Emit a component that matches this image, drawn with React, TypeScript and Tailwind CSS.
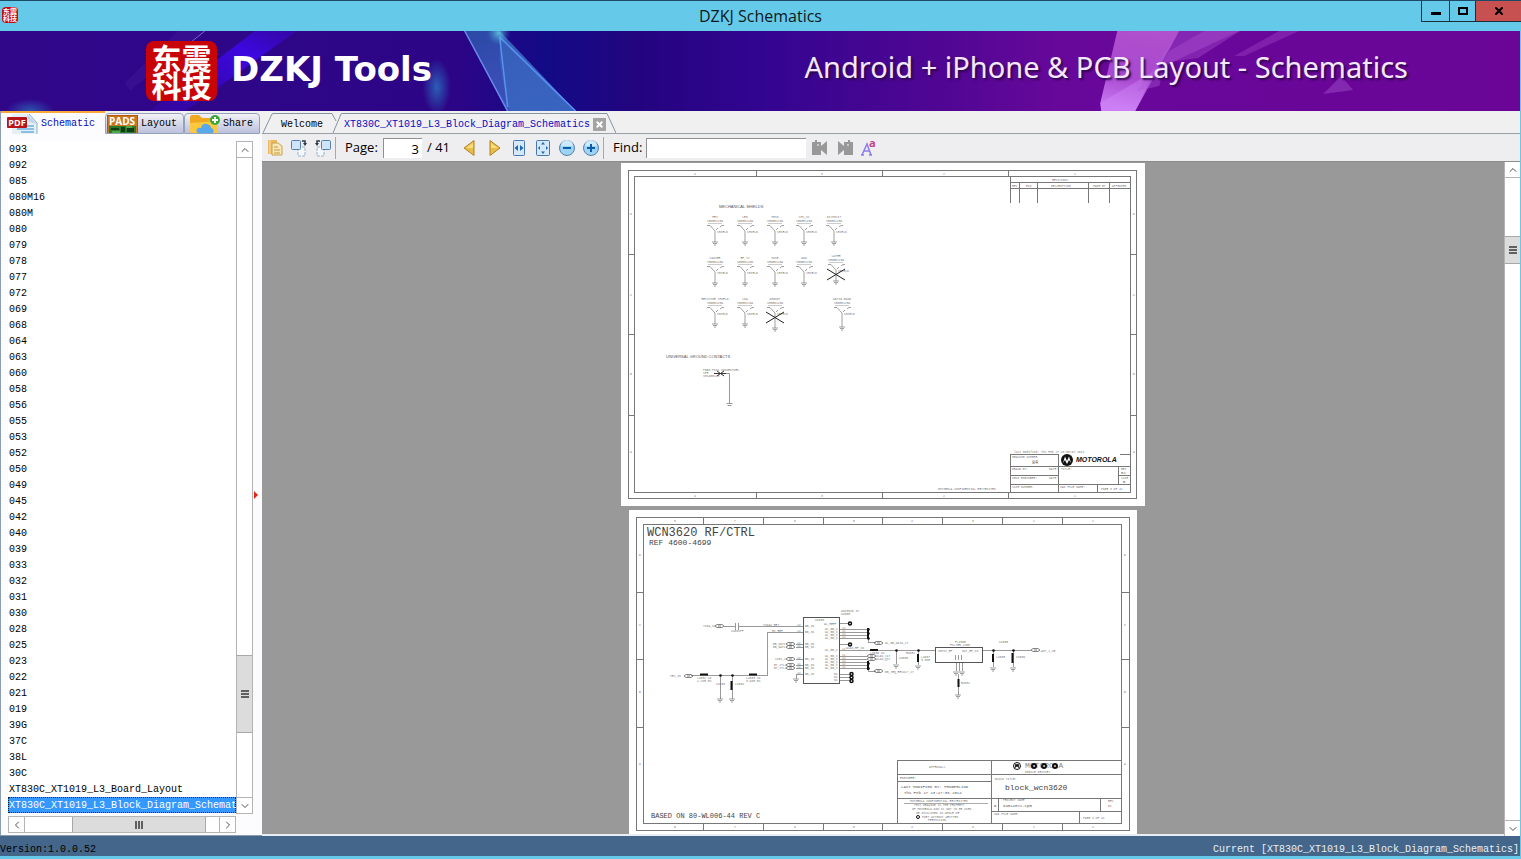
import { ChevronDown, ChevronLeft, ChevronRight, ChevronUp, X } from "lucide-react";
import { type ReactNode, useState } from "react";

const MODELS = [
  "093", "092", "085", "080M16", "080M", "080", "079", "078", "077", "072", "069",
  "068", "064", "063", "060", "058", "056", "055", "053", "052", "050", "049", "045",
  "042", "040", "039", "033", "032", "031", "030", "028", "025", "023", "022", "021",
  "019", "39G", "37C", "38L", "30C",
  "XT830C_XT1019_L3_Board_Layout",
  "XT830C_XT1019_L3_Block_Diagram_Schematics",
];

const CURRENT = "XT830C_XT1019_L3_Block_Diagram_Schematics";

function TitleBar() {
  return (
    <header className="relative flex h-[31px] shrink-0 items-center justify-center border-t border-[#1c4a66] bg-[#65cae9]">
      <p className="absolute left-0.5 top-1.5 size-4 rounded-sm bg-[#c8080c] py-px text-center font-['Noto_Sans_CJK_SC',sans-serif] text-[7px] font-bold leading-[7px] text-white">
        东震
        <br />
        科技
      </p>
      <h1 className="text-base leading-7 text-[#101820]">DZKJ Schematics</h1>
      <div className="absolute right-0 top-0 flex h-[21px] border-b border-l border-[#1d2c38] text-black">
        <button type="button" aria-label="Minimize" className="flex w-7 items-center justify-center border-r border-[#1d2c38]">
          <span className="mt-1 h-[3px] w-2.5 bg-black" />
        </button>
        <button type="button" aria-label="Maximize" className="flex w-[26px] items-center justify-center border-r border-[#1d2c38]">
          <span className="h-2 w-2.5 border-2 border-black" />
        </button>
        <button type="button" aria-label="Close" className="flex w-[45px] items-center justify-center bg-[#c75050]">
          <X size={12} strokeWidth={4} />
        </button>
      </div>
    </header>
  );
}

function BannerArt() {
  return (
    <svg className="absolute inset-0 size-full" viewBox="0 0 1521 80" preserveAspectRatio="none" aria-hidden="true">
      <defs>
        <linearGradient id="base">
          <stop offset="0" stopColor="#31078a" />
          <stop offset="0.3" stopColor="#2c0586" />
          <stop offset="0.36" stopColor="#130a86" />
          <stop offset="0.42" stopColor="#23047f" />
          <stop offset="0.5" stopColor="#320590" />
          <stop offset="0.62" stopColor="#500693" />
          <stop offset="0.7" stopColor="#68089b" />
          <stop offset="1" stopColor="#6a0597" />
        </linearGradient>
        <linearGradient id="beam" x1="0" y1="1" x2="1" y2="0">
          <stop offset="0" stopColor="#3a05c8" stopOpacity="0.3" />
          <stop offset="0.7" stopColor="#3c08e0" />
          <stop offset="1" stopColor="#3a06c0" stopOpacity="0.5" />
        </linearGradient>
        <linearGradient id="shard" x1="0" y1="0" x2="0.6" y2="1">
          <stop offset="0" stopColor="#2a50a8" />
          <stop offset="0.5" stopColor="#3a55b8" />
          <stop offset="1" stopColor="#3c5cc0" />
        </linearGradient>
        <linearGradient id="pink" x1="0.6" y1="0" x2="0.4" y2="1">
          <stop offset="0" stopColor="#b050cc" />
          <stop offset="0.6" stopColor="#a848d0" />
          <stop offset="1" stopColor="#c878f0" />
        </linearGradient>
        <radialGradient id="glow">
          <stop offset="0" stopColor="#2a80c8" stopOpacity="0.9" />
          <stop offset="1" stopColor="#2a80c8" stopOpacity="0" />
        </radialGradient>
        <radialGradient id="spark">
          <stop offset="0" stopColor="#70e8f0" />
          <stop offset="1" stopColor="#40a0d0" stopOpacity="0" />
        </radialGradient>
      </defs>
      <rect width="1521" height="80" fill="url(#base)" />
      <path d="M150 80 255 0h42L185 80z" fill="url(#beam)" />
      <path d="M125 52 178 0h26L130 60z" fill="#4a20a0" opacity="0.3" />
      <path d="M190 12 205 0" stroke="#7a6ad0" strokeWidth="1" />
      <ellipse cx="30" cy="80" rx="24" ry="12" fill="url(#glow)" opacity="0.7" />
      <ellipse cx="437" cy="56" rx="14" ry="28" fill="url(#glow)" opacity="0.8" />
      <path d="M465 0h35l76 80h-69z" fill="url(#shard)" opacity="0.9" />
      <path d="M465 0 508 80" stroke="#6a8ae8" strokeWidth="1.5" />
      <path d="M500 0v30l8 46 3 4h65z" fill="#3a78c8" opacity="0.45" />
      <path d="M500 6 576 80M500 6l8 70" stroke="#5a90f0" strokeWidth="1.5" fill="none" />
      <ellipse cx="499" cy="2" rx="12" ry="12" fill="url(#spark)" opacity="0.7" />
      <path d="M1118 0h62l-44 80h-34l-1-8z" fill="url(#pink)" />
      <path d="M1101 72 1155 40l-19 40h-34z" fill="#d890ff" opacity="0.35" />
      <path d="M1180 0h60l-75 35-5 20-22 5z" fill="#b058d8" opacity="0.4" />
      <path d="M1170 20 1205 0h36l-42 27-36 5z" fill="#b458d8" opacity="0.35" />
      <path d="M1280 0h20l-55 25h-10z" fill="#a850d0" opacity="0.35" />
      <path d="M1324 63 1342 45l12 14z" fill="#9440c0" opacity="0.6" />
    </svg>
  );
}

function Banner() {
  return (
    <div className="relative flex h-20 shrink-0 items-center overflow-hidden bg-[#31078a]">
      <BannerArt />
      <p className="relative ml-[146px] flex h-[60px] w-[71px] items-center justify-center rounded-lg bg-[#c90408] font-['Noto_Sans_CJK_SC',sans-serif] text-[30px] font-bold leading-[27px] text-white">
        东震
        <br />
        科技
      </p>
      <span className="relative ml-3.5 pb-1 font-['DejaVu_Sans',sans-serif] text-[34px] font-bold leading-none text-white">
        DZKJ Tools
      </span>
      <span className="relative ml-auto mr-28 pb-2 font-['Noto_Sans',sans-serif] text-[29px] leading-9 text-[#f4e8ff] [text-shadow:2px_2px_2px_#30064c]">
        Android + iPhone &amp; PCB Layout - Schematics
      </span>
    </div>
  );
}

function PdfIcon() {
  return (
    <svg width="31" height="20" viewBox="0 0 31 20" className="font-['Open_Sans',sans-serif]" aria-hidden="true">
      <path d="M5 0h17l8 9v11H5z" fill="#e6eef6" />
      <path d="M22 0l8 9v11" fill="none" stroke="#8ab0c8" />
      <path d="M20 0l2 8 8 2z" fill="#c0d8ea" />
      <path d="M14 12h13M10 15h17M14 18h13" stroke="#88c0e4" strokeWidth="2" />
      <rect x="0" y="3" width="20" height="11" rx="1" fill="#b81418" />
      <text x="10" y="12" fontSize="9" fontWeight="bold" fill="#fff" textAnchor="middle">PDF</text>
    </svg>
  );
}

function PadsIcon() {
  return (
    <svg width="31" height="18" viewBox="0 0 31 18" className="overflow-visible font-['Open_Sans',sans-serif]" aria-hidden="true">
      <rect width="31" height="18" fill="#b4580c" />
      <rect x="1" y="1" width="29" height="17" fill="#c87820" />
      <rect x="2" y="11" width="27" height="7" fill="#2a7a2a" />
      <path d="M4 13h8v2H4zM14 12h4v5h-4zM20 13h7v4h-7z" fill="#123c18" />
      <path d="M5 17h8M19 12h6" stroke="#70d860" />
      <text x="15" y="10" fontSize="10" fontWeight="bold" fill="#fff" textAnchor="middle">PADS</text>
    </svg>
  );
}

function ShareIcon() {
  return (
    <svg width="31" height="18" viewBox="0 0 31 18" aria-hidden="true">
      <path d="M1 2q0-2 2-2h7l3 3h14v15H3q-2 0-2-2z" fill="#f0a820" />
      <path d="M1 8l28-2v12H3q-2 0-2-3z" fill="#fcc840" />
      <path d="M10 18q-4-1-2-4 1-2 4-1 1-5 6-4 4 1 4 4 4 1 2 5z" fill="#58a8ec" />
      <circle cx="26" cy="5" r="5" fill="#38a838" />
      <path d="M26 2v6M23 5h6" stroke="#fff" strokeWidth="2" />
    </svg>
  );
}

const SIDE_TABS = [
  { name: "Schematic", icon: <PdfIcon />, width: "w-[104px] pl-1.5" },
  { name: "Layout", icon: <PadsIcon />, width: "w-[79px] pl-px" },
  { name: "Share", icon: <ShareIcon />, width: "w-[76px] pl-1" },
];

function Sidebar() {
  const [tab, setTab] = useState("Schematic");
  const [selected, setSelected] = useState(CURRENT);

  return (
    <aside className="flex w-[262px] shrink-0 flex-col border-l border-[#8a9cae] bg-[#f0f0f2]">
      <div role="tablist" className="flex h-[23px] shrink-0 items-end">
        {SIDE_TABS.map(({ name, icon, width }) => (
          <button
            key={name}
            type="button"
            role="tab"
            aria-selected={tab === name}
            onClick={() => setTab(name)}
            className={`${width} flex items-center gap-[3px] overflow-hidden ${
              tab === name
                ? "h-full border-t-2 border-[#f8a838] bg-[#fcfcff] text-[#0808c0]"
                : "h-[21px] rounded-t-sm border border-[#94a2bc] bg-linear-to-b from-[#f2f2f6] to-[#bcc0dc] text-black"
            }`}
          >
            {icon}
            {name}
          </button>
        ))}
      </div>
      <div className="flex min-h-0 flex-1 border-b border-[#8a9cae] bg-[#fcfcff] pb-0.5 pl-[7px] pt-[7px]">
        <div className="flex min-w-0 flex-1 flex-col gap-0.5">
          <div className="flex min-h-0 flex-1">
            <ul className="min-w-0 flex-1 overflow-hidden bg-white">
              {MODELS.map((model) => (
                <li key={model}>
                  <button
                    type="button"
                    onClick={() => setSelected(model)}
                    className={`block h-4 w-full overflow-hidden whitespace-nowrap pl-px text-left leading-[18px] ${
                      selected === model
                        ? "bg-[#3399ff] text-white outline-1 -outline-offset-1 outline-dotted outline-[#202020]"
                        : "text-black"
                    }`}
                  >
                    {model}
                  </button>
                </li>
              ))}
            </ul>
            <div className="flex w-[17px] flex-col border border-[#b4b4b4] bg-white text-[#505050]">
              <button type="button" aria-label="Scroll up" className="grid h-4 place-items-center border-b border-[#b4b4b4]">
                <ChevronUp size={12} />
              </button>
              <div className="grow-[498]" />
              <div className="flex h-[78px] flex-col items-center justify-center gap-px border-y border-[#a8a8a8] bg-[#dcdcdc]">
                <span className="h-0.5 w-2 bg-[#606060]" />
                <span className="h-0.5 w-2 bg-[#606060]" />
                <span className="h-0.5 w-2 bg-[#606060]" />
              </div>
              <div className="grow-[64]" />
              <button type="button" aria-label="Scroll down" className="grid h-4 place-items-center border-t border-[#b4b4b4]">
                <ChevronDown size={12} />
              </button>
            </div>
          </div>
          <div className="mr-[17px] flex h-[17px] shrink-0 border border-[#b4b4b4] bg-white text-[#505050]">
            <button type="button" aria-label="Scroll left" className="grid w-4 place-items-center border-r border-[#b4b4b4]">
              <ChevronLeft size={12} />
            </button>
            <div className="grow-[48]" />
            <div className="flex w-[134px] items-center justify-center gap-px border-x border-[#a8a8a8] bg-[#dcdcdc]">
              <span className="h-2 w-0.5 bg-[#606060]" />
              <span className="h-2 w-0.5 bg-[#606060]" />
              <span className="h-2 w-0.5 bg-[#606060]" />
            </div>
            <div className="grow-[13]" />
            <button type="button" aria-label="Scroll right" className="grid w-4 place-items-center border-l border-[#b4b4b4]">
              <ChevronRight size={12} />
            </button>
          </div>
        </div>
        <div className="flex w-[9px] items-center pt-4">
          <svg width="6" height="8" viewBox="0 0 6 8" aria-hidden="true">
            <path d="M1 0l4 4-4 4z" fill="#e02818" />
          </svg>
        </div>
      </div>
    </aside>
  );
}

function DocumentTabs() {
  return (
    <div role="tablist" className="flex h-[23px] shrink-0 items-end border-b border-[#98a0a8] bg-[#f0f0f1] pl-px">
      <svg width="10" height="20" viewBox="0 0 10 20" fill="none" stroke="#8494a0" aria-hidden="true">
        <path d="M0 20 9 1l1-.5" />
      </svg>
      <button type="button" role="tab" aria-selected="false" className="h-5 border-t border-[#8494a0] pl-2 pr-[9px] pt-0.5 text-black">
        Welcome
      </button>
      <svg width="10" height="20" viewBox="0 0 10 20" fill="none" stroke="#8494a0" aria-hidden="true">
        <path d="M0 .5 4 8M1 20l8-19 1-.5" />
      </svg>
      <div className="flex h-5 items-center border-t border-[#8494a0] pl-0.5 pt-0.5">
        <button type="button" role="tab" aria-selected="true" className="text-[#0808c0]">
          {CURRENT}
        </button>
        <button type="button" aria-label="Close tab" className="ml-[3px] grid size-[13px] place-items-center bg-[#a4a4a4] text-white">
          <X size={9} strokeWidth={5} />
        </button>
      </div>
      <svg width="10" height="20" viewBox="0 0 10 20" fill="none" stroke="#8494a0" aria-hidden="true">
        <path d="M0 .5h1L10 20" />
      </svg>
    </div>
  );
}

function Tool({ label, children }: { label: string; children: ReactNode }) {
  return (
    <button type="button" aria-label={label} title={label} className="grid h-6 w-6 shrink-0 place-items-center">
      <svg width="18" height="18" viewBox="0 0 18 18" className="overflow-visible" aria-hidden="true">
        {children}
      </svg>
    </button>
  );
}

function Toolbar() {
  return (
    <div className="flex h-[27px] shrink-0 items-center bg-[#eeeef0] pl-px pt-px font-['Open_Sans',sans-serif] text-[13px] text-black">
      <Tool label="Copy">
        <path d="M2 1h9v14H2z" fill="#eeb75c" />
        <path d="M4 1v14" stroke="#fbe3b0" />
        <path d="M6 4h6l4 3v9H6z" fill="#f8e8b8" stroke="#c8a050" />
        <path d="M8 8h4M8 11h6M8 14h6" stroke="#c89838" />
      </Tool>
      <Tool label="Rotate right">
        <path d="M8 8h7v9H8z" fill="#f4f8fc" stroke="#9cb0c4" strokeDasharray="3 1" />
        <rect x="1.500" y="1.500" width="9" height="9" rx="1" fill="#cfe4f8" stroke="#5480b0" />
        <path d="M12 2h3v3" fill="none" stroke="#303840" strokeWidth="1.500" />
        <path d="M13 4h4l-2 3z" fill="#303840" />
      </Tool>
      <Tool label="Rotate left">
        <path d="M3 8h7v9H3z" fill="#f4f8fc" stroke="#9cb0c4" strokeDasharray="3 1" />
        <rect x="7.500" y="1.500" width="9" height="9" rx="1" fill="#cfe4f8" stroke="#5480b0" />
        <path d="M6 2H3v3" fill="none" stroke="#303840" strokeWidth="1.500" />
        <path d="M1 4h4L3 7z" fill="#303840" />
      </Tool>
      <span className="h-[22px] w-px bg-[#a8a8a8]" />
      <label htmlFor="page" className="ml-[9px] w-[38px]">Page:</label>
      <input
        id="page"
        type="text"
        defaultValue="3"
        className="h-5 w-[39px] border-l border-t border-[#909090] bg-white pr-[3px] text-right outline-none"
      />
      <span className="ml-[5px] w-[30px] whitespace-nowrap">/ 41</span>
      <Tool label="Previous page">
        <path d="M14 1.500v15L4 9z" fill="#e8bc48" stroke="#b08420" strokeLinejoin="round" />
        <path d="M13 4v5H6z" fill="#f8dc80" />
      </Tool>
      <span className="w-0.5" />
      <Tool label="Next page">
        <path d="M4 1.500v15L14 9z" fill="#e8bc48" stroke="#b08420" strokeLinejoin="round" />
        <path d="M5 4v5h7z" fill="#f8dc80" />
      </Tool>
      <Tool label="Fit width">
        <rect x="3.500" y="1.500" width="11" height="15" rx="1" fill="#d4e8fa" stroke="#4878b0" />
        <path d="M8 6v6L4.500 9zM10 6v6l3.500-3z" fill="#1c68b4" />
      </Tool>
      <Tool label="Fit page">
        <rect x="2.500" y="1.500" width="13" height="15" rx="1" fill="#d4e8fa" stroke="#4878b0" />
        <path d="M9 3l2 2.500H7zM9 15l2-2.500H7zM4 9l2-2v4zM14 9l-2-2v4z" fill="#1c68b4" />
      </Tool>
      <Tool label="Zoom out">
        <circle cx="9" cy="9" r="7.500" fill="#9cd4f8" stroke="#5880a8" />
        <path d="M3 7a6 6 0 0 1 12 0z" fill="#cdeafc" />
        <path d="M5 9h8" stroke="#0c5ca8" strokeWidth="2" />
      </Tool>
      <Tool label="Zoom in">
        <circle cx="9" cy="9" r="7.500" fill="#9cd4f8" stroke="#5880a8" />
        <path d="M3 7a6 6 0 0 1 12 0z" fill="#cdeafc" />
        <path d="M5 9h8M9 5v8" stroke="#0c5ca8" strokeWidth="2" />
      </Tool>
      <span className="h-[22px] w-px bg-[#a8a8a8]" />
      <label htmlFor="find" className="ml-[9px] w-[33px]">Find:</label>
      <input
        id="find"
        type="text"
        className="mr-0.5 h-5 w-40 border-l border-t border-[#909090] bg-white px-1 outline-none"
      />
      <Tool label="Find previous">
        <path d="M1 3h3V1h2v2h4v4l6-5v14l-6-5v5H1z" fill="#989898" />
        <circle cx="7" cy="6" r="1" fill="#d8d8d8" />
      </Tool>
      <span className="w-px" />
      <Tool label="Find next">
        <path d="M17 3h-3V1h-2v2H8v4L2 2v14l6-5v5h9z" fill="#989898" />
        <circle cx="12" cy="6" r="1" fill="#d8d8d8" />
      </Tool>
      <Tool label="Match case">
        <path d="M2 16 7 5l4 11M4 12h6M1 16h3M9 16h3" fill="none" stroke="#8c7cf0" strokeWidth="1.500" />
        <text x="9" y="8" fontSize="11" fontWeight="bold" fill="#c44088">a</text>
      </Tool>
    </div>
  );
}

// Shield symbol: forked antenna on a stem with a ground at its foot
function Shield({ x, y, label, stem = 11, crossed = false }: { x: number; y: number; label: string; stem?: number; crossed?: boolean }) {
  return (
    <g>
      <text x={x} y={y - 13} fontSize="3" textAnchor="middle">{label}</text>
      <text x={x} y={y - 9} fontSize="3" textAnchor="middle">SHD80123A</text>
      <path d={`M${x - 7} ${y - 7.500}h14`} stroke="#aaa" strokeWidth="0.600" />
      <path
        d={`M${x - 8} ${y - 5.500}h3l5 5.500M${x + 1} ${y - 1}l2-2M${x + 5} ${y - 4}l2-1.500h2M${x} ${y}v${stem}m-3 0h6m-5 1.500h4m-3 1.500h2`}
        fill="none"
        stroke="#777"
        strokeWidth="0.700"
      />
      <text x={x + 2} y={y + 2} fontSize="3">SHIELD</text>
      {crossed && <path d={`M${x - 9} ${y - 1}l18 11m0-11l-18 11`} stroke="#222" />}
    </g>
  );
}

const SHIELDS = [
  { x: 715, y: 231, label: "FEI" },
  { x: 745, y: 231, label: "LED" },
  { x: 775, y: 231, label: "MMID" },
  { x: 804, y: 231, label: "SPK_SK" },
  { x: 834, y: 231, label: "DISPOSIT" },
  { x: 715, y: 272, label: "CAUSER" },
  { x: 745, y: 272, label: "RF_TX" },
  { x: 775, y: 272, label: "MUSE" },
  { x: 804, y: 272, label: "ANN" },
  { x: 836, y: 270, label: "LATER", crossed: true },
  { x: 715, y: 313, label: "RESISTOR SHIELD" },
  { x: 745, y: 313, label: "LNA" },
  { x: 775, y: 313, label: "AMOUNT", stem: 15, crossed: true },
  { x: 842, y: 313, label: "DATIN BAND", stem: 14 },
];

function MotorolaMark({ x, y, r }: { x: number; y: number; r: number }) {
  return (
    <g transform={`translate(${x} ${y}) scale(${r / 6})`}>
      <circle r="6" fill="#111" />
      <path d="M-4 3-2-3.500 0 1l2-4.500L4 3 2 0 0 4-2 0z" fill="#fff" />
    </g>
  );
}

function ShieldsPage() {
  return (
    <svg
      width="524"
      height="343"
      viewBox="621 163 524 343"
      fill="none"
      className="shrink-0 bg-white font-['Liberation_Mono',monospace]"
      aria-label="Page 3"
    >
      <g stroke="#777" shapeRendering="crispEdges">
        <path d="M628.500 170.500h508v328h-508zM634.500 176.500h496v316h-496z" />
        <path d="M756.500 170v6M882.500 170v6M1008.500 170v6M756.500 493v6M882.500 493v6M1008.500 493v6" />
        <path d="M628 254.500h6M628 334.500h6M628 415.500h6M1131 254.500h6M1131 334.500h6M1131 415.500h6" />
        <path d="M1010.500 177v26M1010 182.500h120M1010 188.500h120M1019.500 183v20M1037.500 183v20M1088.500 183v20M1109.500 183v20" />
        <path d="M1010.500 492v-37.500h48V492M1120 454.500h11M1010 466.500h121M1010 475.500h48M1010 484.500h121M1118.500 466v18M1118 475.500h13M1097.500 484v8" />
      </g>
      <g fill="#777" fontSize="3">
        {[694, 821, 943, 1074].map((x, i) => (
          <g key={x}>
            <text x={x} y="175">{4 - i}</text>
            <text x={x} y="497">{4 - i}</text>
          </g>
        ))}
        {[215, 296, 375, 453].map((y, i) => (
          <g key={y}>
            <text x="630" y={y}>{"DCBA"[i]}</text>
            <text x="1133" y={y}>{"DCBA"[i]}</text>
          </g>
        ))}
        <text x="1052" y="181">REVISIONS</text>
        <text x="1012" y="187">REV</text>
        <text x="1026" y="187">ECO</text>
        <text x="1051" y="187">DESCRIPTION</text>
        <text x="1093" y="187">MADE BY</text>
        <text x="1112" y="187">APPROVED</text>
        {SHIELDS.map((shield) => (
          <Shield key={`${shield.x}-${shield.y}`} {...shield} />
        ))}
        <text x="703" y="371">POGO PINS CONNECTORS</text>
        <text x="703" y="374">SPR</text>
        <text x="703" y="377">SMCA80123</text>
        <path d="M724 373.500h5.500v30m-3 0h6m-5 2h4" fill="none" stroke="#999" />
        <path d="M717 371l7 5m0-5l-7 5M714 373.500h12" fill="none" stroke="#333" />
        <text x="1014" y="453">last modified: Thu Feb 27 13:58:07 2014</text>
        <text x="1012" y="458">DRAWING NUMBER</text>
        <text x="1012" y="470">DRAWN BY:</text>
        <text x="1049" y="470">DATE:</text>
        <text x="1061" y="470">TITLE:</text>
        <text x="1012" y="479">CHKD ENGINEER:</text>
        <text x="1049" y="479">DATE:</text>
        <text x="1012" y="488">SIZE NUMBER:</text>
        <text x="1060" y="488">CAD FILE NAME:</text>
        <text x="1121" y="470">REV</text>
        <text x="1121" y="479">SIZE</text>
        <text x="1101" y="490">PAGE 3 OF 41</text>
        <text x="938" y="490">MOTOROLA CONFIDENTIAL RESTRICTED</text>
      </g>
      <g fill="#555" fontSize="4" className="font-['Liberation_Sans',sans-serif]">
        <text x="719" y="208">MECHANICAL SHIELDS</text>
        <text x="666" y="358">UNIVERSAL GROUND CONTACTS</text>
      </g>
      <text x="1032" y="464" fontSize="5" fill="#555">84</text>
      <text x="1121" y="474" fontSize="4" fill="#555">02</text>
      <text x="1123" y="483" fontSize="4" fill="#555">B</text>
      <MotorolaMark x={1067} y={460} r={6} />
      <text x="1076" y="462" fontSize="7" fontWeight="bold" fontStyle="italic" fill="#111" className="font-['Liberation_Sans',sans-serif]">
        MOTOROLA
      </text>
    </svg>
  );
}

function Port({ x, y }: { x: number; y: number }) {
  return <path d={`M${x} ${y}l2-1.500h5l2 1.500-2 1.500h-5zM${x + 3} ${y}h3`} stroke="#666" strokeWidth="0.800" />;
}

function Ground({ x, y }: { x: number; y: number }) {
  return <path d={`M${x - 3} ${y}h6m-5 1.500h4m-3 1.500h2`} stroke="#777" strokeWidth="0.700" />;
}

function BlockPage() {
  return (
    <svg
      width="508"
      height="324"
      viewBox="629 510 508 324"
      fill="none"
      className="shrink-0 bg-white font-['Liberation_Mono',monospace]"
      aria-label="Page 4"
    >
      <g stroke="#777" shapeRendering="crispEdges">
        <path d="M636.500 517.500h493v313h-493zM643.500 524.500h478v299h-478z" />
        {[703, 763, 823, 882, 942, 1002, 1062].map((x) => (
          <path key={x} d={`M${x + 0.5} 517v7M${x + 0.5} 824v7`} />
        ))}
        <path d="M636 592.500h7M636 659.500h7M636 727.500h7M1122 592.500h7M1122 659.500h7M1122 727.500h7" />
        <path d="M897.500 823v-62.500h224M991.500 760v63M897 774.500h224M897 781.500h94M897 798.500h224M991 811.500h130M998.500 798v13M1100.500 798v13M1079.500 811v12" />
      </g>
      <g stroke="#555" shapeRendering="crispEdges">
        <path d="M803.500 617.500h36v66h-36zM935.500 647.500h47v15h-47z" />
      </g>
      <g stroke="#999" shapeRendering="crispEdges">
        <path d="M724 626.500h11M739 626.500h64M735.500 623v7M738.500 623v7M803 632.500h-35.500v43H691" />
        <path d="M796 644.500h7M796 647.500h7M796 659.500h7M796 665.500h7M796 668.500h7M803 674.500h-6.500v4" />
        <path d="M720.500 675v24M732.500 675v24M840 623.500h8M840 644.500h8" />
        <path d="M840 629.500h28M840 632.500h28M840 635.500h28M840 638.500h28M868.500 639v3.500h7" />
        <path d="M840 650.500h95M840 656.500h27M840 659.500h27M840 662.500h28M840 665.500h28M840 668.500h28M868.500 667v4.500h7" />
        <path d="M840 674.500h10M840 677.500h10M840 680.500h10M896.500 650v14M918.500 650v15M983 650.500h48M993.500 650v17M1013.500 650v17" />
        <path d="M956.500 663v8M959.500 663v8M962.500 663v8M958.500 674v21M955.500 655v5M958.500 655v5M961.500 655v5" />
      </g>
      <g stroke="#111">
        <path d="M868 628v11M868 661v9M731.500 681v9M918 654v8M993 654v8M1012.500 653v10M958.500 679v8" strokeWidth="2" />
        <path d="M700 674.500h8M749 674.500h8M870 650h8" strokeWidth="2" />
        <circle cx="850" cy="623.500" r="1.500" strokeWidth="1.500" />
        <circle cx="850" cy="644.500" r="1.500" strokeWidth="1.500" />
        <circle cx="851.500" cy="674" r="1.500" strokeWidth="1.500" />
        <circle cx="851.500" cy="677.500" r="1.500" strokeWidth="1.500" />
        <circle cx="851.500" cy="681" r="1.500" strokeWidth="1.500" />
      </g>
      <g fill="#111">
        {[[720, 675], [732, 675], [896, 650], [918, 650], [993, 650], [1013, 650], [868, 629], [868, 633], [868, 638], [868, 663], [868, 668]].map(([x, y]) => (
          <circle key={`${x}-${y}`} cx={x + 0.5} cy={y + 0.5} r="1.300" />
        ))}
      </g>
      {[[715, 626], [684, 676], [786, 644], [786, 647], [786, 659], [786, 665], [786, 668], [874, 643], [867, 656], [867, 659], [874, 671], [1031, 650]].map(([x, y]) => (
        <Port key={`${x}-${y}`} x={x} y={y} />
      ))}
      {[[720, 699], [732, 699], [796, 679], [896, 665], [918, 666], [956, 672], [962, 672], [958, 695], [993, 668], [1013, 668]].map(([x, y]) => (
        <Ground key={`${x}-${y}`} x={x} y={y} />
      ))}
      <g fill="#777" fontSize="3">
        {[675, 735, 795, 854, 912, 973, 1034, 1093].map((x, i) => (
          <g key={x}>
            <text x={x - 1} y="522">{8 - i}</text>
            <text x={x - 1} y="828">{8 - i}</text>
          </g>
        ))}
        {[556, 626, 693, 765].map((y, i) => (
          <g key={y}>
            <text x="639" y={y}>{"DCBA"[i]}</text>
            <text x="1124" y={y}>{"DCBA"[i]}</text>
          </g>
        ))}
        <text x="703" y="627">TXDA_IN</text>
        <text x="731" y="632">C4602PF</text>
        <text x="763" y="626">TXDAC_RET</text>
        <text x="772" y="632">RX_REF</text>
        <text x="670" y="677">TRX_IN</text>
        <text x="697" y="679">L4601 1N</text>
        <text x="697" y="682">2.2NH 5%</text>
        <text x="746" y="679">L4603 1N</text>
        <text x="746" y="682">3.9NH 5%</text>
        <text x="716" y="685">C4603</text>
        <text x="735" y="685">L4604</text>
        <text x="773" y="645">BB_DAT1</text>
        <text x="773" y="648">BB_DAT2</text>
        <text x="775" y="660">SSBI_1</text>
        <text x="774" y="666">BT_CTL1</text>
        <text x="774" y="669">BT_CTL2</text>
        <text x="841" y="612">WCN3620 IC</text>
        <text x="841" y="615">U4600</text>
        <text x="815" y="621">U4600</text>
        <text x="824" y="625">WL_REFP</text>
        {[627, 633, 645, 648, 660, 666, 669, 675].map((y) => (
          <g key={y}>
            <text x="797" y={y - 1}>24</text>
            <text x="805" y={y}>BB_IN</text>
          </g>
        ))}
        {[630, 633, 636, 639, 651, 657, 660, 663, 666, 669].map((y) => (
          <g key={y}>
            <text x="825" y={y}>WL_BB_I</text>
            <text x="842" y={y - 1}>12</text>
          </g>
        ))}
        {[675, 678, 681].map((y) => (
          <text key={y} x="834" y={y}>NC</text>
        ))}
        <text x="885" y="644">WL_BB_DATA_17</text>
        <text x="846" y="649">WLAN_RF_IO</text>
        <text x="876" y="657">WLAN_I17</text>
        <text x="876" y="660">WLAN_Q17</text>
        <text x="885" y="673">BB_IRQ_RESULT_17</text>
        <text x="870" y="654">L4605 1N</text>
        <text x="899" y="659">C4606</text>
        <text x="906" y="654">R4601</text>
        <text x="921" y="658">L4607</text>
        <text x="921" y="661">3.3NH</text>
        <text x="955" y="643">FL4600</text>
        <text x="950" y="646">FILTER_2400</text>
        <text x="938" y="652">INPUT_RF</text>
        <text x="962" y="652">OUT_RF_IN</text>
        <text x="961" y="684">R4602</text>
        <text x="999" y="643">C4608</text>
        <text x="996" y="658">L4608</text>
        <text x="1016" y="658">C4609</text>
        <text x="1041" y="652">ANT_2_4G</text>
        <text x="995" y="780">BLOCK TITLE:</text>
        <text x="1025" y="773">MOBILE DEVICES</text>
        <text x="900" y="779">ENGINEER:</text>
        <text x="929" y="768">APPROVALS</text>
        <text x="1003" y="801">PROJECT NAME</text>
        <text x="994" y="815">CAD FILE NAME:</text>
        <text x="1108" y="802">REV</text>
        <text x="1108" y="807">01</text>
        <text x="1083" y="819">PAGE 4 OF 41</text>
        <text x="914" y="806">THIS DRAWING IS THE PROPERTY</text>
        <text x="912" y="810">OF MOTOROLA AND IS NOT TO BE USED</text>
        <text x="916" y="814">OR DISCLOSED IN WHOLE OR</text>
        <text x="922" y="818">PART WITHOUT WRITTEN</text>
        <text x="928" y="821">PERMISSION</text>
        <text x="910" y="802">MOTOROLA CONFIDENTIAL RESTRICTED</text>
      </g>
      <circle cx="918" cy="817" r="1.500" stroke="#111" />
      <path d="M904 803.500h84" stroke="#aaa" />
      <g fill="#555" fontSize="4">
        <text x="901" y="788">LAST MODIFIED BY: PROBERLIND</text>
        <text x="904" y="794">Thu Feb 27 13:47:38 2014</text>
        <text x="994" y="807">B</text>
        <text x="1003" y="807">84014572.cpm</text>
      </g>
      <circle cx="1017" cy="766" r="3.500" stroke="#111" />
      <path d="M1015 768l1-4 1 3 1-3 1 4" stroke="#111" />
      <text x="1025" y="768" fontSize="8" fill="#888">MOTOROLA</text>
      <g stroke="#111" strokeWidth="2">
        <circle cx="1034" cy="766" r="2" />
        <circle cx="1044" cy="766" r="2" />
        <circle cx="1055" cy="766" r="2" />
      </g>
      <g fill="#444">
        <text x="647" y="536" fontSize="12">WCN3620 RF/CTRL</text>
        <text x="649" y="545" fontSize="8">REF 4600-4699</text>
        <text x="651" y="818" fontSize="7">BASED ON 80-WL006-44 REV C</text>
        <text x="1005" y="790" fontSize="8">block_wcn3620</text>
      </g>
    </svg>
  );
}

function Viewer() {
  return (
    <div className="flex min-h-0 flex-1 border-t border-[#8c8c8c] bg-[#999999]">
      <div className="flex min-w-0 flex-1 flex-col items-center gap-1 overflow-hidden border-b-2 border-[#e8eef4] pt-px">
        <ShieldsPage />
        <BlockPage />
      </div>
      <div className="flex w-4 flex-col border-l border-[#b4b4b4] bg-white text-[#505050]">
        <button type="button" aria-label="Scroll up" className="grid h-4 place-items-center border-b border-[#b4b4b4]">
          <ChevronUp size={12} />
        </button>
        <div className="grow-[58]" />
        <div className="flex h-7 flex-col items-center justify-center gap-px border-y border-[#a8a8a8] bg-[#dcdcdc]">
          <span className="h-0.5 w-2 bg-[#606060]" />
          <span className="h-0.5 w-2 bg-[#606060]" />
          <span className="h-0.5 w-2 bg-[#606060]" />
        </div>
        <div className="grow-[556]" />
        <button type="button" aria-label="Scroll down" className="grid h-4 place-items-center border-t border-[#b4b4b4]">
          <ChevronDown size={12} />
        </button>
      </div>
    </div>
  );
}

export default function App() {
  return (
    <div className="flex h-screen flex-col overflow-hidden bg-[#f0f0f1] font-['Open_Sans',sans-serif]">
      <TitleBar />
      <div className="flex min-h-0 flex-1 flex-col border-b-[3px] border-r border-[#65cae9]">
        <Banner />
        <div className="flex min-h-0 flex-1 font-['Liberation_Mono',monospace] text-[10px]">
          <Sidebar />
          <main className="flex min-w-0 flex-1 flex-col">
            <DocumentTabs />
            <Toolbar />
            <Viewer />
          </main>
        </div>
        <footer className="flex h-5 shrink-0 items-end justify-between bg-[#44668a] pr-px font-['Liberation_Mono',monospace] text-[10px] leading-3">
          <span className="text-black">Version:1.0.0.52</span>
          <span className="text-[#e8f0f8]">Current [{CURRENT}]</span>
        </footer>
      </div>
    </div>
  );
}
